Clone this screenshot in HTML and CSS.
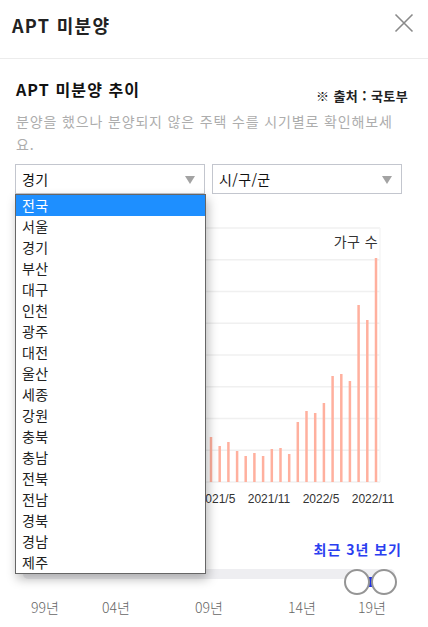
FILE: index.html
```html
<!DOCTYPE html>
<html lang="ko">
<head>
<meta charset="utf-8">
<title>APT 미분양</title>
<link rel="stylesheet" href="styles.css">
</head>
<body>
<div class="panel">
  <header class="header">
    <h1 class="header-title">APT 미분양</h1>
    <button class="close" aria-label="닫기">
      <svg width="20" height="20" viewBox="0 0 20 20"><path d="M1.5 1.5 L18.5 18.5 M18.5 1.5 L1.5 18.5" stroke="#8a8a8a" stroke-width="1.6" fill="none"/></svg>
    </button>
  </header>
  <main class="content">
    <div class="title-row">
      <h2 class="section-title">APT 미분양 추이</h2>
      <span class="source">※ 출처 : 국토부</span>
    </div>
    <p class="desc">분양을 했으나 분양되지 않은 주택 수를 시기별로 확인해보세요.</p>
    <div class="selects">
      <div class="select-wrap">
        <div class="select"><span class="select-value">경기</span><span class="arrow"></span></div>
        <ul class="options">
          <li class="option active">전국</li>
          <li class="option">서울</li>
          <li class="option">경기</li>
          <li class="option">부산</li>
          <li class="option">대구</li>
          <li class="option">인천</li>
          <li class="option">광주</li>
          <li class="option">대전</li>
          <li class="option">울산</li>
          <li class="option">세종</li>
          <li class="option">강원</li>
          <li class="option">충북</li>
          <li class="option">충남</li>
          <li class="option">전북</li>
          <li class="option">전남</li>
          <li class="option">경북</li>
          <li class="option">경남</li>
          <li class="option">제주</li>
        </ul>
      </div>
      <div class="select-wrap">
        <div class="select"><span class="select-value">시/구/군</span><span class="arrow"></span></div>
      </div>
    </div>
    <svg class="chart" width="396" height="310" viewBox="0 0 396 310">
      <g stroke="#f0f0f0" stroke-width="1.5">
        <line x1="40" y1="24" x2="364" y2="24"/>
        <line x1="40" y1="55.75" x2="364" y2="55.75"/>
        <line x1="40" y1="87.5" x2="364" y2="87.5"/>
        <line x1="40" y1="119.25" x2="364" y2="119.25"/>
        <line x1="40" y1="151" x2="364" y2="151"/>
        <line x1="40" y1="182.75" x2="364" y2="182.75"/>
        <line x1="40" y1="214.5" x2="364" y2="214.5"/>
        <line x1="40" y1="246.25" x2="364" y2="246.25"/>
        <line x1="40" y1="278" x2="364" y2="278"/>
        <line x1="364" y1="24" x2="364" y2="278" stroke="#f6f6f6"/>
      </g>
      <text class="unit" x="362" y="43" text-anchor="end">가구 수</text>
      <g fill="#ffb09e">
        <rect x="167.7" y="230" width="2.5" height="48"/>
        <rect x="176.4" y="236" width="2.5" height="42"/>
        <rect x="185.1" y="228" width="2.5" height="50"/>
        <rect x="193.75" y="233" width="2.5" height="45"/>
        <rect x="202.45" y="242" width="2.5" height="36"/>
        <rect x="211.15" y="238" width="2.5" height="40"/>
        <rect x="219.85" y="247" width="2.5" height="31"/>
        <rect x="228.45" y="252" width="2.5" height="26"/>
        <rect x="237.15" y="249" width="2.5" height="29"/>
        <rect x="245.85" y="252" width="2.5" height="26"/>
        <rect x="254.55" y="245" width="2.5" height="33"/>
        <rect x="263.25" y="244" width="2.5" height="34"/>
        <rect x="271.95" y="250" width="2.5" height="28"/>
        <rect x="280.55" y="218" width="2.5" height="60"/>
        <rect x="289.25" y="207" width="2.5" height="71"/>
        <rect x="297.95" y="209" width="2.5" height="69"/>
        <rect x="306.65" y="199" width="2.5" height="79"/>
        <rect x="315.35" y="172" width="2.5" height="106"/>
        <rect x="324.05" y="170" width="2.5" height="108"/>
        <rect x="332.65" y="177" width="2.5" height="101"/>
        <rect x="341.35" y="101" width="2.5" height="177"/>
        <rect x="350.05" y="116" width="2.5" height="162"/>
        <rect x="358.75" y="54" width="2.5" height="224"/>
      </g>
      <g class="axis" text-anchor="middle">
        <text x="149" y="299">2020/11</text>
        <text x="201" y="299">2021/5</text>
        <text x="253" y="299">2021/11</text>
        <text x="305" y="299">2022/5</text>
        <text x="357" y="299">2022/11</text>
      </g>
    </svg>
    <div class="range-row">
      <button class="recent">최근 3년 보기</button>
    </div>
    <div class="slider">
      <div class="track"></div>
      <div class="range-fill"></div>
      <div class="handle handle-start"></div>
      <div class="handle handle-end"></div>
    </div>
    <div class="marks">
      <span class="mark">99년</span>
      <span class="mark">04년</span>
      <span class="mark">09년</span>
      <span class="mark">14년</span>
      <span class="mark">19년</span>
    </div>
  </main>
</div>
</body>
</html>
```

FILE: styles.css
```css
* { box-sizing: border-box; }
html, body {
  margin: 0;
  padding: 0;
  background: #ffffff;
  font-family: "Noto Sans CJK KR", "Noto Sans", "Liberation Sans", sans-serif;
  color: #222;
}
.panel {
  width: 428px;
  height: 627px;
  overflow: hidden;
}
.header {
  height: 59px;
  padding: 0 14px 8px 12px;
  display: flex;
  align-items: center;
  justify-content: space-between;
  border-bottom: 1px solid #ececec;
}
.header-title {
  margin: 0;
  font-size: 18px;
  line-height: 24px;
  font-weight: 700;
  letter-spacing: 1.3px;
  color: #222;
}
.close {
  border: 0;
  background: none;
  padding: 0;
  width: 20px;
  height: 20px;
  margin-top: -4px;
  display: flex;
}
.content {
  padding: 0 16px;
}
.title-row {
  display: flex;
  justify-content: space-between;
  align-items: flex-start;
  margin-top: 20px;
  height: 25px;
}
.section-title {
  margin: 0;
  font-size: 16px;
  line-height: 20px;
  font-weight: 700;
  letter-spacing: 1.1px;
  color: #111;
}
.source {
  margin-top: 9px;
  margin-right: 4px;
  font-size: 13px;
  line-height: 16px;
  font-weight: 700;
  letter-spacing: 0.4px;
  color: #222;
}
.desc {
  margin: 6px 0 0 0;
  max-width: 384px;
  font-size: 14px;
  line-height: 23px;
  letter-spacing: 0.85px;
  color: #adadad;
}
.selects {
  display: flex;
  gap: 7px;
  margin: 8px 0 0 -1px;
}
.select-wrap {
  position: relative;
  width: 190px;
}
.select {
  height: 30px;
  border: 1px solid #c3c6ce;
  display: flex;
  align-items: center;
  justify-content: space-between;
  padding: 0 9px 0 6px;
  background: #fff;
}
.select-value {
  font-size: 14px;
  line-height: 18px;
  letter-spacing: 0.4px;
  color: #111;
}
.arrow {
  width: 0;
  height: 0;
  border-left: 5px solid transparent;
  border-right: 5px solid transparent;
  border-top: 8px solid #a3a3a3;
  margin-top: 1px;
}
.options {
  position: absolute;
  top: 100%;
  left: 0;
  width: 191px;
  margin: 0;
  padding: 0;
  list-style: none;
  background: #fff;
  border: 1px solid #666;
  box-shadow: 2px 5px 10px rgba(0, 0, 0, 0.28);
  z-index: 5;
}
.option {
  height: 21px;
  line-height: 21px;
  padding-left: 6px;
  font-size: 14px;
  letter-spacing: 0.4px;
  color: #222;
}
.option.active {
  background: #1e8fff;
  color: #fff;
}
.chart {
  display: block;
  margin-top: 10px;
}
.unit {
  font-family: "Noto Sans CJK KR", sans-serif;
  font-size: 14px;
  letter-spacing: 0.4px;
  fill: #333;
}
.axis {
  font-family: "Liberation Sans", "Noto Sans", sans-serif;
  font-size: 12px;
  fill: #333;
}
.range-row {
  display: flex;
  justify-content: flex-end;
  margin-top: 25px;
  padding-right: 10px;
}
.recent {
  border: 0;
  background: none;
  padding: 0;
  font-family: "Noto Sans CJK KR", sans-serif;
  font-size: 14px;
  line-height: 20px;
  font-weight: 700;
  letter-spacing: 1px;
  color: #2a3ef0;
}
.slider {
  position: relative;
  height: 26px;
  margin-top: 10px;
}
.track {
  height: 10px;
  margin: 8px 17px 0 7px;
  border-radius: 5px;
  background: #eeeef1;
}
.range-fill {
  position: absolute;
  left: 350px;
  top: 8px;
  width: 10px;
  height: 10px;
  background: #1f31e6;
}
.handle {
  position: absolute;
  top: 0;
  width: 26px;
  height: 26px;
  border-radius: 50%;
  border: 2px solid #959595;
  background: #fff;
}
.handle-start { left: 328px; }
.handle-end { left: 355px; }
.marks {
  display: grid;
  grid-template-columns: 71px 93px 93px 70px auto;
  padding-left: 15px;
  margin-top: 3px;
}
.mark {
  font-size: 14px;
  line-height: 18px;
  font-weight: 300;
  color: #666;
}
```
